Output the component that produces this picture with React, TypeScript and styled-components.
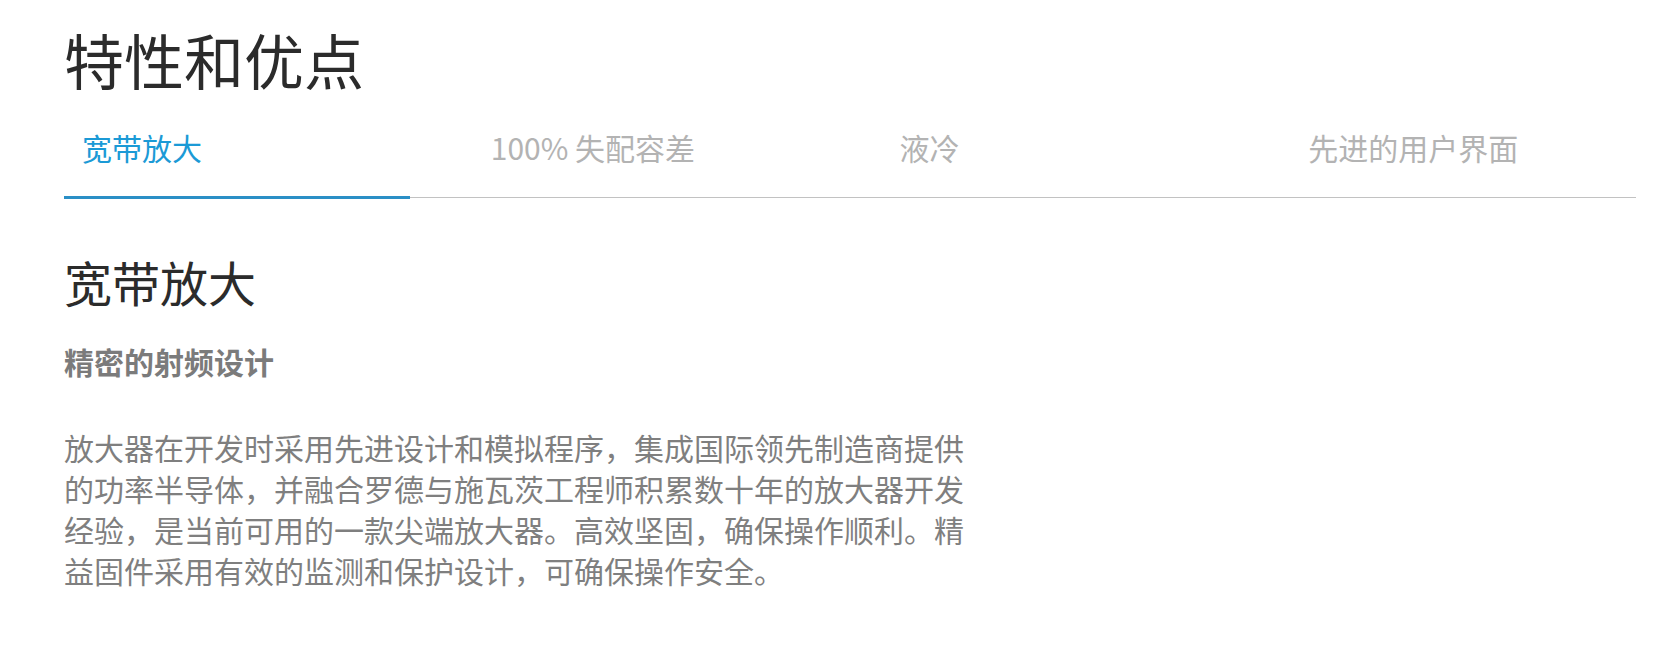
import React, { useState } from 'react';
import styled, { createGlobalStyle } from 'styled-components';

const GlobalStyle = createGlobalStyle`
    html, body {
        margin: 0;
        padding: 0;
        background: #ffffff;
    }
    body {
        font-family: "Noto Sans CJK SC", "Noto Sans", sans-serif;
    }
`;

const tabs = [
    { id: 'wideband', label: '宽带放大' },
    { id: 'mismatch', label: '100% 失配容差' },
    { id: 'cooling', label: '液冷' },
    { id: 'ui', label: '先进的用户界面' },
];

const App = () => {
    const [active, setActive] = useState('wideband');

    return (
        <>
            <GlobalStyle />
            <Page>
                <Title>特性和优点</Title>
                <TabList>
                    {tabs.map(tab => (
                        <Tab key={tab.id} $active={tab.id === active} onClick={() => setActive(tab.id)}>
                            {tab.label}
                        </Tab>
                    ))}
                </TabList>
                <Panel>
                    <PanelHeading>宽带放大</PanelHeading>
                    <PanelSubheading>精密的射频设计</PanelSubheading>
                    <PanelText>
                        放大器在开发时采用先进设计和模拟程序，集成国际领先制造商提供的功率半导体，并融合罗德与施瓦茨工程师积累数十年的放大器开发经验，是当前可用的一款尖端放大器。高效坚固，确保操作顺利。精益固件采用有效的监测和保护设计，可确保操作安全。
                    </PanelText>
                </Panel>
            </Page>
        </>
    );
};

const Page = styled.div`
    padding: 23px 44px 40px 64px;
`;

const Title = styled.h1`
    margin: 0;
    font-size: 60px;
    line-height: 72px;
    font-weight: 400;
    color: #2b2b2b;
`;

const TabList = styled.div`
    display: flex;
    gap: 63px;
    border-bottom: 1px solid #c2c2c2;
`;

const Tab = styled.button<{ $active: boolean }>`
    flex: 1;
    margin: 0 0 -2px;
    padding: 32px 18px 29px;
    border: none;
    border-bottom: 3px solid ${props => (props.$active ? '#2a8fc6' : 'transparent')};
    background: none;
    text-align: left;
    font-family: "Noto Sans CJK SC", sans-serif;
    font-size: 30px;
    line-height: 40px;
    font-weight: 400;
    color: ${props => (props.$active ? '#1b9ad6' : '#b3b3b3')};
    cursor: pointer;
`;

const Panel = styled.section`
    padding-top: 54px;
`;

const PanelHeading = styled.h2`
    margin: 0;
    font-size: 48px;
    line-height: 58px;
    font-weight: 400;
    color: #2b2b2b;
`;

const PanelSubheading = styled.h3`
    margin: 31px 0 0;
    font-size: 30px;
    line-height: 40px;
    font-weight: 700;
    color: #7b7b7b;
`;

const PanelText = styled.p`
    margin: 46px 0 0;
    max-width: 910px;
    font-size: 30px;
    line-height: 41px;
    color: #7f7f7f;
`;

export default App;
